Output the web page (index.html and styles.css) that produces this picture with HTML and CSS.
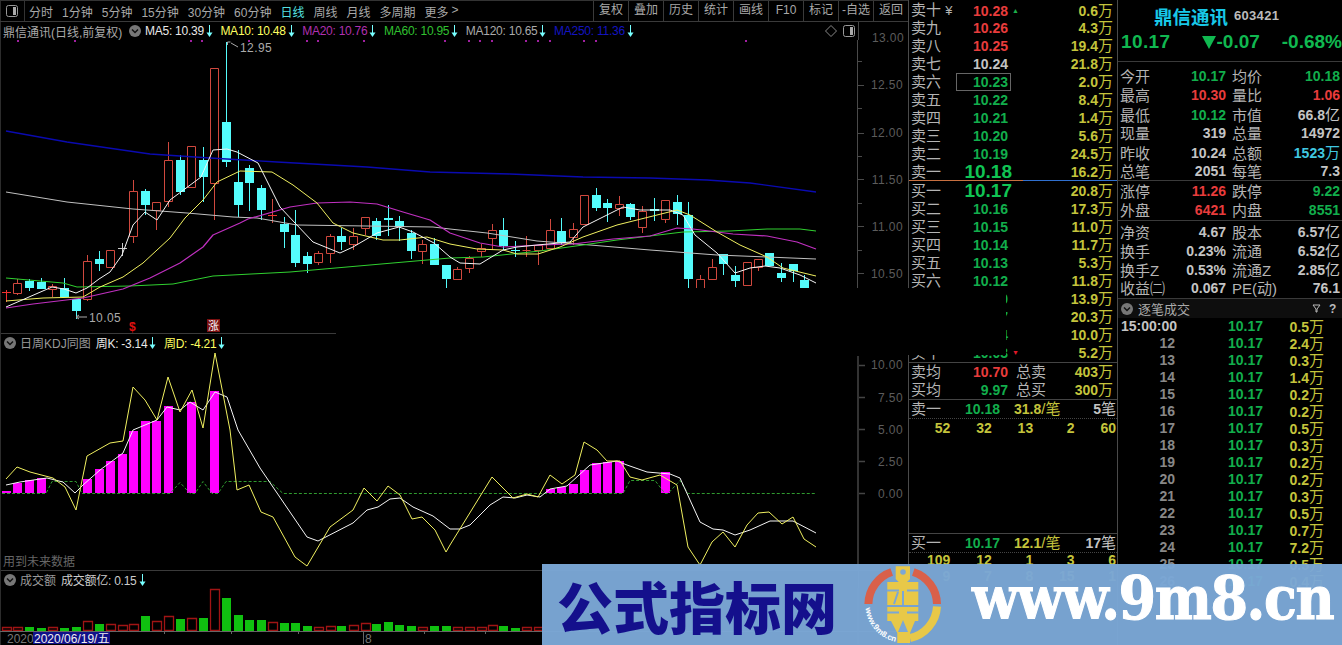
FILE: index.html
```html
<!DOCTYPE html>
<html lang="zh">
<head>
<meta charset="utf-8">
<title>鼎信通讯</title>
<link rel="stylesheet" href="styles.css">
</head>
<body>
<svg class="defs" width="0" height="0"><defs>
<g id="arrow"><path d="M3.5 1V10" class="arr-line"/><path d="M0.5 8.500H6.500L3.500 13z" class="arr-head"/></g>
<g id="chev"><circle cx="6" cy="6" r="6" class="chev-c"/><path d="M3 4.500L6 7.500L9 4.500" class="chev-l"/></g>
</defs></svg>
<div class="page">
  <section class="charts">
    <nav class="toolbar">
      <span class="tb-icon"><svg width="12" height="12"><rect x="0.500" y="0.500" width="11" height="11" rx="2" class="toggle-o"/><rect x="7" y="2" width="3" height="8" class="toggle-f"/></svg></span>
      <div class="tb-periods">
        <span>分时</span><span>1分钟</span><span>5分钟</span><span>15分钟</span><span>30分钟</span><span>60分钟</span><span class="on">日线</span><span>周线</span><span>月线</span><span>多周期</span><span>更多</span><span class="more">&gt;</span>
      </div>
      <div class="tb-btns">
        <span>复权</span><span>叠加</span><span>历史</span><span>统计</span><span>画线</span><span>F10</span><span>标记</span><span>-自选</span><span>返回</span>
      </div>
    </nav>

    <header class="phead">
      <div class="phead-l">
        <span class="ttl">鼎信通讯(日线,前复权)</span>
        <svg class="chev main-chev" width="12" height="12"><use href="#chev"/></svg>
        <span class="ma c-w">MA5: 10.39<svg class="ar" width="7" height="14"><use href="#arrow"/></svg></span>
        <span class="ma c-y">MA10: 10.48<svg class="ar" width="7" height="14"><use href="#arrow"/></svg></span>
        <span class="ma c-m">MA20: 10.76<svg class="ar" width="7" height="14"><use href="#arrow"/></svg></span>
        <span class="ma c-g">MA60: 10.95<svg class="ar" width="7" height="14"><use href="#arrow"/></svg></span>
        <span class="ma c-s">MA120: 10.65<svg class="ar" width="7" height="14"><use href="#arrow"/></svg></span>
        <span class="ma c-b">MA250: 11.36<svg class="ar" width="7" height="14"><use href="#arrow"/></svg></span>
        <span class="ph-icons">
          <svg width="12" height="12"><path d="M6 0.500L11.500 6L6 11.500L0.500 6z" class="diamond"/></svg>
          <svg width="12" height="12"><rect x="0.500" y="0.500" width="11" height="11" rx="2" class="toggle-o"/><rect x="7" y="2" width="3" height="8" class="toggle-f"/></svg>
        </span>
      </div>
      <div class="axis-cap axis-cap-top">13.00</div>
    </header>
    <svg class="plot plot-main" width="908" height="293" viewBox="0 40 908 293">
      <path class="axis" d="M857.500 40V288M858 61.500h4M858 85.500h6M858 108.500h4M858 133.500h6M858 156.500h4M858 179.500h6M858 203.500h4M858 226.500h6M858 250.500h4M858 273.500h6"/>
      <g class="axis-label"><text x="903" y="89">12.50</text><text x="903" y="137">12.00</text><text x="903" y="184">11.50</text><text x="903" y="231">11.00</text><text x="903" y="278">10.50</text></g>
      <path class="dots" d="M17 40h2v2h-2zM74 40h2v2h-2zM190 40h2v2h-2zM201 40h2v2h-2zM248 40h2v2h-2zM306 40h2v2h-2zM317 40h2v2h-2zM363 40h2v2h-2zM444 40h2v2h-2zM468 40h2v2h-2zM479 40h2v2h-2zM491 40h2v2h-2zM525 40h2v2h-2zM537 40h2v2h-2zM549 40h2v2h-2zM583 40h2v2h-2zM595 40h2v2h-2zM745 40h2v2h-2z"/>
      <path class="cd-wick" d="M29.500 279V291M41.500 278V289M64.500 278V297M76.500 299V319M99.500 251V271M145.500 189V215M180.500 155V195M203.500 147V202M226.500 42V167M238.500 150V217M249.500 165V211M261.500 185V220M284.500 217V248M295.500 210V267M307.500 252V273M341.500 228V250M376.500 218V240M388.500 205V236M399.500 216V241M411.500 230V259M434.500 238V265M446.500 265V289M503.500 218V250M515.500 241V257M561.500 218V245M596.500 188V211M607.500 199V222M630.500 203V220M654.500 198V221M677.500 195V225M688.500 202V288M723.500 254V275M735.500 266V287M781.500 263V282M793.500 264V282M804.500 275V289"/>
      <path class="cd-body" d="M25 281h9v7h-9zM37 282h9v7h-9zM60 288h9v9h-9zM72 299h9v12h-9zM95 259h9v5h-9zM141 191h9v14h-9zM176 160h9v32h-9zM199 160h9v17h-9zM222 122h9v40h-9zM234 182h9v23h-9zM245 168h9v15h-9zM257 188h9v22h-9zM280 224h9v8h-9zM291 235h9v28h-9zM303 256h9v8h-9zM337 236h9v6h-9zM372 221h9v15h-9zM384 218h9v2h-9zM395 221h9v6h-9zM407 233h9v18h-9zM430 244h9v21h-9zM442 265h9v14h-9zM499 230h9v16h-9zM511 250h9v1h-9zM557 231h9v12h-9zM592 195h9v13h-9zM603 203h9v5h-9zM626 204h9v13h-9zM650 209h9v2h-9zM673 202h9v12h-9zM684 215h9v64h-9zM719 254h9v10h-9zM731 275h9v6h-9zM765 253h9v13h-9zM777 273h9v5h-9zM789 264h9v7h-9zM800 280h9v9h-9z"/>
      <path class="cd-red" d="M13.500 283.500h8v10h-8zM17.500 279V283M17.500 294V295M48.500 286.500h8v3h-8zM52.500 284V286M52.500 290V297M83.500 261.500h8v38h-8zM87.500 255V261M87.500 300V301M106.500 250.500h8v17h-8zM129.500 191.500h8v45h-8zM133.500 180V191M133.500 237V243M152.500 202.500h8v8h-8zM156.500 211V230M164.500 160.500h8v41h-8zM168.500 142V160M168.500 202V207M187.500 146.500h8v41h-8zM210.500 68.500h8v115h-8zM214.500 184V220M272.500 199V223M314.500 253.500h8v9h-8zM318.500 251V253M318.500 263V265M326.500 236.500h8v17h-8zM330.500 234V236M330.500 254V263M349.500 236.500h8v8h-8zM353.500 228V236M353.500 245V250M361.500 217.500h8v11h-8zM365.500 229V235M418.500 244.500h8v7h-8zM422.500 240V244M422.500 252V264M453.500 269.500h8v10h-8zM457.500 267V269M465.500 258.500h8v10h-8zM469.500 256V258M469.500 269V273M477.500 248.500h8v3h-8zM481.500 244V248M481.500 252V257M488.500 230.500h8v8h-8zM492.500 224V230M492.500 239V250M522.500 250.500h8M526.500 236V257M534.500 245.500h8v5h-8zM538.500 251V265M546.500 230.500h8v18h-8zM550.500 219V230M550.500 249V250M569.500 229.500h8v8h-8zM573.500 223V229M573.500 238V245M580.500 195.500h8v29h-8zM615.500 204.500h8v4h-8zM619.500 196V204M619.500 209V216M638.500 211.500h8v16h-8zM642.500 206V211M642.500 228V233M661.500 200.500h8v19h-8zM665.500 220V223M696.500 279.500h8v10h-8zM700.500 275V279M708.500 267.500h8v12h-8zM712.500 259V267M743.500 262.500h8v23h-8zM754.500 259.500h8v8h-8zM758.500 268V271"/>
      <path class="cd-cross-r" d="M6.500 290V302M2 292.500h9M268 215.500h9"/>
      <path class="cd-cross-w" d="M122.500 243V256M118 248.500h9"/>
      <polyline class="ln-blue" points="6,131 67,142 150,154 210,158 277,162 367,167 430,172 510,174 583,177 650,178 707,180 750,183 816,192"/>
      <polyline class="ln-silver" points="6,192 67,202 133,209 187,213 233,217 257,218 297,225 367,226 433,227 450,229 487,233 537,241 590,245 650,250 717,255 767,257 816,259"/>
      <polyline class="ln-green" points="6,278 63,283 77,287 130,286 173,284 213,276 290,272 347,267 450,258 483,257 540,251 583,245 617,240 650,236 683,232 730,231 767,229 800,229 816,231"/>
      <polyline class="ln-mag" points="6,308 33,304 83,298 123,289 150,278 180,263 203,247 213,235 240,223 248,219 290,207 317,203 350,202 377,204 403,212 430,220 450,233 480,243 503,247 540,245 573,244 613,239 650,236 677,228 693,229 733,234 767,236 797,242 816,249"/>
      <polyline class="ln-yel" points="6,301 43,298 83,297 100,287 123,277 143,263 170,238 185,218 203,200 217,182 240,171 272,172 293,185 317,203 333,223 353,233 383,240 400,240 427,237 450,244 477,249 503,250 517,254 538,254 560,247 583,237 617,225 657,215 677,210 690,215 717,232 740,245 767,257 783,268 816,276"/>
      <polyline class="ln-wht" points="6,307 52,287 64,289 76,293 87,288 99,279 110,272 122,255 133,225 145,212 157,220 170,200 201,177 213,150 227,149 237,152 258,163 268,183 280,207 295,223 313,242 340,253 353,247 377,233 399,227 413,232 434,243 450,257 460,263 480,264 503,250 517,247 537,245 570,242 583,227 607,215 623,207 640,210 670,210 683,215 695,235 717,253 735,273 750,268 765,266 780,268 800,275 816,283"/>
      <path class="note-l" d="M227.500 42h3M227.500 42v3M231 43L238 47"/>
      <text class="note" x="240" y="52">12.95</text>
      <path class="note-l" d="M76 317H87M76 317l3-2M76 317l3 2"/>
      <text class="note" x="89" y="322">10.05</text>
      <text class="mk-s" x="129" y="331">$</text>
      <rect class="mk-box" x="207" y="319" width="13" height="13"/>
      <text class="mk-z" x="208" y="330">涨</text>
    </svg>

    <header class="phead phead-b">
      <div class="phead-l">
        <svg class="chev sub-chev" width="12" height="12"><use href="#chev"/></svg>
        <span class="sub-t">日周KDJ同图</span>
        <span class="ma c-w">周K: -3.14<svg class="ar" width="7" height="14"><use href="#arrow"/></svg></span>
        <span class="ma c-y">周D: -4.21<svg class="ar" width="7" height="14"><use href="#arrow"/></svg></span>
      </div>
      <div class="axis-cap axis-cap-off"></div>
    </header>
    <svg class="plot plot-kdj" width="908" height="219" viewBox="0 351 908 219">
      <path class="axis axis-thick" d="M858 356V570M859 365.500h6M859 397.500h6M859 429.500h6M859 461.500h6M859 493.500h6"/>
      <g class="axis-label"><text x="903" y="369">10.00</text><text x="903" y="402">7.50</text><text x="903" y="434">5.00</text><text x="903" y="466">2.50</text><text x="903" y="498">0.00</text></g>
      <path class="bar-m" d="M2 491h9v2h-9zM13 483h9v10h-9zM25 480h9v13h-9zM37 478h9v15h-9zM83 479h9v14h-9zM95 469h9v24h-9zM106 461h9v32h-9zM118 454h9v39h-9zM129 431h9v62h-9zM141 421h9v72h-9zM152 421h9v72h-9zM164 406h9v87h-9zM187 402h9v91h-9zM210 391h9v102h-9zM546 489h9v4h-9zM557 487h9v6h-9zM569 484h9v9h-9zM580 470h9v23h-9zM592 463h9v30h-9zM603 462h9v31h-9zM615 461h9v32h-9zM661 472h9v21h-9z"/>
      <path class="dash" d="M2 493.500H46L52 481.500H76L82 493.500H170L180 482.500L190 493.500H195L203 481.500L212 493.500H218L226 481.500H270L283 493.500H623L630 480.500H655L665 493.500H668L680 480.500L688 493.500H816"/>
      <polyline class="kd-w" points="6,485 20,482 47,478 63,482 75,493 83,485 100,470 123,453 133,430 157,420 167,407 180,410 190,402 203,410 215,392 227,397 238,430 260,468 307,537 318,541 353,523 367,510 378,507 390,499 400,498 413,507 433,516 450,529 460,529 470,525 490,505 503,497 515,498 527,495 540,497 550,489 567,486 590,465 617,461 627,465 647,472 670,474 680,478 700,522 713,529 723,530 735,535 750,530 770,521 793,521 816,533"/>
      <polyline class="kd-y" points="6,479 17,467 30,472 53,478 65,487 76,510 87,456 110,443 123,441 133,387 145,400 157,420 168,377 180,412 192,390 203,428 215,353 230,430 237,490 249,485 261,512 273,517 295,557 307,566 330,527 353,510 364,488 377,501 388,486 400,495 412,519 422,517 435,530 446,552 450,545 492,477 513,498 527,494 538,497 550,475 562,484 575,475 584,442 597,450 607,461 620,461 630,477 642,480 660,475 677,485 688,547 700,565 712,542 723,532 735,547 747,525 758,513 769,512 782,524 793,517 804,539 816,547"/>
      <text class="warn" x="3" y="566">用到未来数据</text>
    </svg>

    <header class="phead phead-b">
      <div class="phead-l">
        <svg class="chev sub-chev" width="12" height="12"><use href="#chev"/></svg>
        <span class="sub-t">成交额</span>
        <span class="ma c-l">成交额亿: 0.15<svg class="ar" width="7" height="14"><use href="#arrow"/></svg></span>
      </div>
      <div class="axis-cap"></div>
    </header>
    <svg class="plot plot-vol" width="908" height="56" viewBox="0 589 908 56">
      <path class="vol-g" d="M25 628h9v4h-9zM37 629h9v3h-9zM60 629h9v3h-9zM72 628h9v4h-9zM95 625h9v7h-9zM141 617h9v15h-9zM176 620h9v12h-9zM199 619h9v13h-9zM222 599h9v33h-9zM234 616h9v16h-9zM245 621h9v11h-9zM257 621h9v11h-9zM280 624h9v8h-9zM291 624h9v8h-9zM303 627h9v5h-9zM337 627h9v5h-9zM372 625h9v7h-9zM384 623h9v9h-9zM395 626h9v6h-9zM407 627h9v5h-9zM430 627h9v5h-9zM442 627h9v5h-9zM499 627h9v5h-9zM511 629h9v3h-9z"/>
      <path class="vol-r" d="M2.500 628.500h9v3h-9zM13.500 628.500h9v3h-9zM48.500 628.500h9v3h-9zM83.500 622.500h9v9h-9zM106.500 625.500h9v6h-9zM118.500 626.500h9v5h-9zM129.500 625.500h9v6h-9zM152.500 622.500h9v9h-9zM164.500 617.500h9v14h-9zM187.500 619.500h9v12h-9zM210.500 590.500h9v41h-9zM268.500 623.500h9v8h-9zM314.500 628.500h9v3h-9zM326.500 627.500h9v4h-9zM349.500 626.500h9v5h-9zM361.500 624.500h9v7h-9zM418.500 628.500h9v3h-9zM453.500 628.500h9v3h-9zM465.500 628.500h9v3h-9zM477.500 628.500h9v3h-9zM488.500 626.500h9v5h-9zM522.500 628.500h9v3h-9zM534.500 628.500h9v3h-9z"/>
      <path class="vol-base" d="M0 632.500H908M164.500 632v3M231.500 632v3M298.500 632v3M424.500 632v3M485.500 632v3M363.500 632v13"/>
      <path class="axis axis-thick" d="M858 589V645"/>
      <text class="date-y" x="7" y="644">2020</text>
      <rect class="date-box" x="33" y="633" width="77" height="12"/>
      <text class="date-t" x="34" y="644">2020/06/19/五</text>
      <text class="date-y" x="365" y="644">8</text>
    </svg>
  </section>

  <section class="book">
    <div class="bk-row"><span class="l">卖十 <em>¥</em></span><b class="r">10.28</b><i class="up">▲</i><span class="v">0.6<u>万</u></span></div>
    <div class="bk-row"><span class="l">卖九</span><b class="r">10.26</b><i></i><span class="v">4.3<u>万</u></span></div>
    <div class="bk-row"><span class="l">卖八</span><b class="r">10.25</b><i></i><span class="v">19.4<u>万</u></span></div>
    <div class="bk-row"><span class="l">卖七</span><b class="n">10.24</b><i></i><span class="v">21.8<u>万</u></span></div>
    <div class="bk-row"><span class="l">卖六</span><b class="g hl">10.23</b><i></i><span class="v">2.0<u>万</u></span></div>
    <div class="bk-row"><span class="l">卖五</span><b class="g">10.22</b><i></i><span class="v">8.4<u>万</u></span></div>
    <div class="bk-row"><span class="l">卖四</span><b class="g">10.21</b><i></i><span class="v">1.4<u>万</u></span></div>
    <div class="bk-row"><span class="l">卖三</span><b class="g">10.20</b><i></i><span class="v">5.6<u>万</u></span></div>
    <div class="bk-row"><span class="l">卖二</span><b class="g">10.19</b><i></i><span class="v">24.5<u>万</u></span></div>
    <div class="bk-row"><span class="l">卖一</span><b class="g big">10.18</b><i></i><span class="v">16.2<u>万</u></span></div>
    <div class="bk-mid"></div>
    <div class="bk-row"><span class="l">买一</span><b class="g big">10.17</b><i></i><span class="v">20.8<u>万</u></span></div>
    <div class="bk-row"><span class="l">买二</span><b class="g">10.16</b><i></i><span class="v">17.3<u>万</u></span></div>
    <div class="bk-row"><span class="l">买三</span><b class="g">10.15</b><i></i><span class="v">11.0<u>万</u></span></div>
    <div class="bk-row"><span class="l">买四</span><b class="g">10.14</b><i></i><span class="v">11.7<u>万</u></span></div>
    <div class="bk-row"><span class="l">买五</span><b class="g">10.13</b><i></i><span class="v">5.3<u>万</u></span></div>
    <div class="bk-row"><span class="l">买六</span><b class="g">10.12</b><i></i><span class="v">11.8<u>万</u></span></div>
    <div class="bk-row"><span class="l">买七</span><b class="g">10.10</b><i></i><span class="v">13.9<u>万</u></span></div>
    <div class="bk-row"><span class="l">买八</span><b class="g">10.07</b><i></i><span class="v">20.3<u>万</u></span></div>
    <div class="bk-row"><span class="l">买九</span><b class="g">10.04</b><i></i><span class="v">10.0<u>万</u></span></div>
    <div class="bk-row"><span class="l">买十</span><b class="g">10.03</b><i class="dn">▼</i><span class="v">5.2<u>万</u></span></div>
    <div class="bk-sec bk-tot">
      <div class="tot-row"><span class="l">卖均</span><b class="r">10.70</b><span class="l2">总卖</span><span class="v">403<u>万</u></span></div>
      <div class="tot-row"><span class="l">买均</span><b class="g">9.97</b><span class="l2">总买</span><span class="v">300<u>万</u></span></div>
    </div>
    <div class="bk-sec bk-q">
      <div class="q-row"><span class="l">卖一</span><b class="g">10.18</b><span class="v">31.8<u>/笔</u></span><span class="qn">5<u>笔</u></span></div>
      <div class="q-ticks"><b>52</b><b>32</b><b>13</b><b>2</b><b>60</b></div>
    </div>
    <div class="bk-sec bk-q bk-q2">
      <div class="q-row"><span class="l">买一</span><b class="g">10.17</b><span class="v">12.1<u>/笔</u></span><span class="qn">17<u>笔</u></span></div>
      <div class="q-ticks q-tight"><b>109</b><b>12</b><b>1</b><b>3</b><b>6</b></div>
      <div class="q-ticks q-tight"><b>9</b><b>7</b><b>8</b><b>15</b><b>1</b></div>
    </div>
  </section>

  <section class="quote">
    <div class="qt-top">
      <div class="qt-name"><strong>鼎信通讯</strong><span>603421</span></div>
      <div class="qt-price"><b class="p1">10.17</b><b class="p2"><svg width="14" height="14"><path d="M0 1H14L7 14z" class="tri"/></svg>-0.07</b><b class="p3">-0.68%</b></div>
    </div>
    <div class="qt-grp qt-g1">
      <div class="qr"><span>今开</span><b class="g">10.17</b><span>均价</span><b class="g">10.18</b></div>
      <div class="qr"><span>最高</span><b class="r">10.30</b><span>量比</span><b class="r">1.06</b></div>
      <div class="qr"><span>最低</span><b class="g">10.12</b><span>市值</span><b class="n">66.8<u>亿</u></b></div>
      <div class="qr"><span>现量</span><b class="n">319</b><span>总量</span><b class="n">14972</b></div>
      <div class="qr"><span>昨收</span><b class="n">10.24</b><span>总额</span><b class="c">1523<u>万</u></b></div>
      <div class="qr"><span>总笔</span><b class="n">2051</b><span>每笔</span><b class="n">7.3</b></div>
    </div>
    <div class="qt-grp qt-g2">
      <div class="qr"><span>涨停</span><b class="r">11.26</b><span>跌停</span><b class="g">9.22</b></div>
      <div class="qr"><span>外盘</span><b class="r">6421</b><span>内盘</span><b class="g">8551</b></div>
    </div>
    <div class="qt-grp qt-g2">
      <div class="qr"><span>净资</span><b class="n">4.67</b><span>股本</span><b class="n">6.57<u>亿</u></b></div>
      <div class="qr"><span>换手</span><b class="n">0.23%</b><span>流通</span><b class="n">6.52<u>亿</u></b></div>
      <div class="qr"><span>换手Z</span><b class="n">0.53%</b><span>流通Z</span><b class="n">2.85<u>亿</u></b></div>
      <div class="qr"><span>收益㈡</span><b class="n">0.067</b><span>PE(动)</span><b class="n">76.1</b></div>
    </div>
    <div class="tr-head">
      <svg class="chev" width="12" height="12"><use href="#chev"/></svg>
      <span class="tr-t">逐笔成交</span>
      <svg class="tr-filter" width="9" height="9"><path d="M1 1H8L5 5V8H4V5z" class="filter"/></svg>
      <span class="tr-q">?</span>
    </div>
    <div class="tr-list">
      <div class="tr first"><b>15:00:00</b><b class="g">10.17</b><b class="y">0.5<u>万</u></b></div>
      <div class="tr"><b>12</b><b class="g">10.17</b><b class="y">2.4<u>万</u></b></div>
      <div class="tr"><b>13</b><b class="g">10.17</b><b class="y">0.3<u>万</u></b></div>
      <div class="tr"><b>14</b><b class="g">10.17</b><b class="y">1.4<u>万</u></b></div>
      <div class="tr"><b>15</b><b class="g">10.17</b><b class="y">0.2<u>万</u></b></div>
      <div class="tr"><b>16</b><b class="g">10.17</b><b class="y">0.2<u>万</u></b></div>
      <div class="tr"><b>17</b><b class="g">10.17</b><b class="y">0.5<u>万</u></b></div>
      <div class="tr"><b>18</b><b class="g">10.17</b><b class="y">0.3<u>万</u></b></div>
      <div class="tr"><b>19</b><b class="g">10.17</b><b class="y">0.2<u>万</u></b></div>
      <div class="tr"><b>20</b><b class="g">10.17</b><b class="y">0.2<u>万</u></b></div>
      <div class="tr"><b>21</b><b class="g">10.17</b><b class="y">0.3<u>万</u></b></div>
      <div class="tr"><b>22</b><b class="g">10.17</b><b class="y">0.5<u>万</u></b></div>
      <div class="tr"><b>23</b><b class="g">10.17</b><b class="y">0.7<u>万</u></b></div>
      <div class="tr"><b>24</b><b class="g">10.17</b><b class="y">7.2<u>万</u></b></div>
      <div class="tr"><b>25</b><b class="g">10.17</b><b class="y">0.5<u>万</u></b></div>
      <div class="tr"><b>26</b><b class="g">10.17</b><b class="y">0.4<u>万</u></b></div>
    </div>
  </section>

  <div class="mask"></div>

  <aside class="banner">
    <span class="bn-cn">公式指标网</span>
    <svg class="bn-logo" width="80" height="80" viewBox="0 0 80 80">
      <path class="lg-red" d="M6.400 39A34.300 34.300 0 0 1 29.700 7M51.300 7A34.300 34.300 0 0 1 75 39"/>
      <path class="lg-yel" d="M75 41.500A34.300 34.300 0 0 1 48 73"/>
      <path class="lg-body" d="M33.700 1.200H48V14L45 17H56.300V40H25.300V17H36.700L33.700 14zM25.300 42H56.300V56H53L48 68V78H35.300V68L29 56H25.300z"/>
      <circle class="lg-hole" cx="41" cy="7" r="2.800"/>
      <path class="lg-cut" d="M25 25.500H37M45 25.500H57M41 26V40M36 27L32 39M25 47.500H37M45 47.500H57"/>
      <path class="lg-tri" d="M41 55L36 67H46z"/>
      <path id="lgarc" class="lg-none" d="M3.500 43A37.500 37.500 0 0 0 36 77"/>
      <text class="lg-txt"><textPath href="#lgarc">www.9m8.cn</textPath></text>
    </svg>
    <span class="bn-www">www.9m8.cn</span>
  </aside>
</div>
</body>
</html>
```
FILE: styles.css
```css
* { box-sizing: border-box; }
html, body { margin: 0; padding: 0; background: #000; }
body { font-family: "Liberation Sans", "Noto Sans CJK SC", sans-serif; font-size: 12px; color: #bbb; overflow: hidden; }
.defs { position: absolute; }
.page { position: relative; width: 1342px; height: 645px; overflow: hidden; display: flex; background: #000; }
b { font-weight: 700; }
i, em, u { font-style: normal; text-decoration: none; }

/* ---------- left chart column ---------- */
.charts { width: 908px; flex: none; display: flex; flex-direction: column; border-left: 1px solid #2c2c2c; }
.toolbar { height: 22px; flex: none; display: flex; align-items: center; border-top: 1px solid #333; border-bottom: 1px solid #3a3a3a; color: #a8a8a8; margin-left: -1px; }
.tb-icon { width: 25px; height: 100%; flex: none; display: flex; align-items: center; padding-left: 6px; border-right: 1px solid #333; }
.tb-periods { display: flex; gap: 9px; padding-left: 4px; }
.tb-periods .on { color: #54e0e0; }
.tb-periods .more { margin-left: -6px; }
.tb-btns { margin-left: auto; display: flex; height: 100%; }
.tb-btns span { width: 35px; border-left: 1px solid #3a3a3a; text-align: center; line-height: 19px; }
.toggle-o { fill: none; stroke: #999; }
.toggle-f { fill: #aaa; }
.diamond { fill: none; stroke: #888; }

.phead { height: 18px; flex: none; display: flex; color: #aaa; }
.phead-b { height: 18px; border-top: 1px solid #3a3a3a; }
.phead-l { flex: 1; display: flex; align-items: center; padding-left: 2px; position: relative; white-space: nowrap; }
.axis-cap { width: 50px; flex: none; border-left: 1px solid #444; }
.axis-cap-off { border-left-color: #000; }
.axis-cap-top { height: 18px; line-height: 32px; padding-right: 4px; text-align: right; color: #5c5c5c; font-size: 12px; letter-spacing: .4px; white-space: nowrap; }
.ttl { color: #aaa; width: 126px; flex: none; }
.chev { flex: none; }
.chev-c { fill: #777; }
.chev-l { fill: none; stroke: #111; stroke-width: 1.500; }
.main-chev { margin-right: 4px; }
.sub-chev { margin: 0 4px 0 1px; }
.sub-t { color: #999; margin-right: 5px; }
.ma { display: inline-flex; align-items: center; margin-right: 7.500px; letter-spacing: -.25px; }
.ar { margin-left: 2px; flex: none; }
.arr-line { stroke: #7ff; fill: none; }
.arr-head { fill: #7ff; }
.c-w { color: #e8e8e8; }
.c-y { color: #ffff60; }
.c-m { color: #b030b0; }
.c-g { color: #30c030; }
.c-s { color: #aaa; }
.c-b { color: #1414c0; }
.c-l { color: #ccc; }
.ph-icons { position: absolute; right: 3px; top: 3px; display: flex; gap: 6px; }

.plot { display: block; flex: none; margin-left: -1px; font-family: "Liberation Sans", "Noto Sans CJK SC", sans-serif; }
.axis { stroke: #4a4a4a; fill: none; }
.axis-thick { stroke: #444; stroke-width: 1.500; }
.axis-label { fill: #5c5c5c; font-size: 12px; letter-spacing: .4px; text-anchor: end; }
.dots { fill: #a020a0; }
.cd-wick { stroke: #54fcfc; fill: none; }
.cd-body { fill: #54fcfc; }
.cd-red { stroke: #d0483e; fill: none; }
.cd-cross-r { stroke: #f03030; fill: none; stroke-width: 1; }
.cd-cross-w { stroke: #ccc; fill: none; }
polyline { fill: none; stroke-linejoin: round; }
.ln-blue { stroke: #0a0ab0; stroke-width: 1.300; }
.ln-silver { stroke: #c0c0c0; }
.ln-green { stroke: #30d030; }
.ln-mag { stroke: #c030c0; stroke-width: 1.200; }
.ln-yel { stroke: #f0f060; }
.ln-wht { stroke: #f4f4f4; }
.note { fill: #aaa; font-size: 12px; letter-spacing: .4px; }
.note-l { stroke: #aaa; fill: none; }
.mk-s { fill: #e01010; font-size: 12px; font-weight: 700; }
.mk-box { fill: #7a1010; }
.mk-z { fill: #fff; font-size: 11px; }
.bar-m { fill: #ff00ff; }
.dash { fill: none; stroke: #2f9a2f; stroke-dasharray: 3 2; }
.kd-w { stroke: #f4f4f4; }
.kd-y { stroke: #f0f060; }
.warn { fill: #666; font-size: 12px; }
.vol-g { fill: #10c010; }
.vol-r { fill: none; stroke: #a01414; stroke-width: 1.300; }
.vol-base { stroke: #666; fill: none; }
.date-y { fill: #777; font-size: 12px; }
.date-box { fill: #101088; }
.date-t { fill: #eee; font-size: 12px; }

/* ---------- order book ---------- */
.book { width: 210px; flex: none; border-left: 1px solid #4a4a4a; border-right: 1px solid #4a4a4a; display: flex; flex-direction: column; padding-top: 1px; }
.bk-row { height: 18px; flex: none; display: grid; grid-template-columns: 45px 55px 12px 1fr; padding: 0 4px 0 2px; align-items: center; line-height: 18px; white-space: nowrap; }
.l, .l2 { font-size: 15px; color: #b4b4b4; }
.l em { font-size: 13px; margin-left: 0; }
.bk-row b { font-size: 14px; text-align: right; padding-right: 3px; height: 18px; }
.bk-row b.big { font-size: 19px; padding-right: 0; margin-right: -1px; }
.bk-row b.hl { outline: 1px solid #666; outline-offset: -1px; }
.bk-row i { font-size: 7px; text-align: left; padding-left: 1px; }
.up { color: #1cb04a; }
.dn { color: #e01828; }
.r { color: #e83c3c; }
.g { color: #12ae4c; }
.big.g { color: #10c454; }
.n { color: #c4c4c4; }
.c { color: #40c8e0; }
.y { color: #c4c43c; }
.v { color: #c4c43c; font-weight: 700; font-size: 14px; text-align: right; }
u { font-weight: 400; font-size: 15px; }
.bk-mid { height: 1px; flex: none; margin-top: -1px; background: linear-gradient(90deg, #c87040 0 55%, #3070d0 55% 100%); }
.bk-mid + .bk-row { margin-top: 1px; }
.bk-sec { border-top: 1px solid #444; flex: none; }
.bk-tot { height: 37px; }
.tot-row { height: 18px; display: grid; grid-template-columns: 45px 55px 50px 1fr; padding: 0 4px 0 2px; margin-right: 0; align-items: center; line-height: 18px; white-space: nowrap; }
.tot-row b { font-size: 14px; text-align: right; padding-right: 3px; }
.tot-row .l2 { padding-left: 5px; }
.bk-q { height: 134px; }
.bk-q2 { height: auto; }
.q-row { height: 19px; display: grid; grid-template-columns: 45px 44px 60px 1fr; align-items: center; padding: 0 1px 0 2px; border-bottom: 1px dotted #444; white-space: nowrap; line-height: 18px; }
.q-row b { font-size: 14px; text-align: right; }
.q-row .v { text-align: left; padding-left: 14px; overflow: visible; }
.qn { color: #c4c4c4; font-weight: 700; font-size: 14px; text-align: right; }
.qn u { color: #c4c4c4; }
.q-ticks { display: grid; grid-template-columns: repeat(5, 1fr); width: 207px; height: 18px; line-height: 18px; color: #c4c43c; font-size: 14px; }
.q-ticks b { text-align: right; }
.q-tight { height: 16px; line-height: 15px; }

/* ---------- quote ---------- */
.quote { flex: 1; min-width: 0; display: flex; flex-direction: column; }
.qt-top { height: 62px; flex: none; border-bottom: 1px solid #3a3a3a; }
.qt-name { height: 31px; display: flex; align-items: center; padding-left: 36px; gap: 6px; }
.qt-name strong { font-size: 18.500px; color: #18c8e8; font-weight: 700; }
.qt-name span { font-size: 13px; font-weight: 700; color: #bbb; letter-spacing: .3px; }
.qt-price { height: 22px; display: flex; align-items: center; padding-left: 3px; color: #10b850; font-size: 19px; }
.p1 { letter-spacing: .4px; }
.p2 { margin-left: 31px; display: inline-flex; align-items: center; width: 74px; gap: 1px; }
.p3 { margin-left: 13px; }
.tri { fill: #10b850; }
.qt-grp { flex: none; border-bottom: 1px solid #3a3a3a; }
.qt-g1 { padding-top: 5px; height: 119px; }
.qt-g2 { padding-top: 1px; }
.qr { height: 19px; display: grid; grid-template-columns: 50px 56px 1fr auto; padding: 0 2px; align-items: center; white-space: nowrap; line-height: 19px; }
.qr span { font-size: 15px; color: #b4b4b4; }
.qr span:nth-child(3) { padding-left: 6px; }
.qr b { font-size: 14px; text-align: right; }
.qr b u { color: inherit; }
.tr-head { height: 19px; flex: none; display: flex; align-items: center; padding: 0 4px 0 3px; background: #0e0e0e; }
.tr-t { font-size: 13px; color: #aaa; margin-left: 5px; }
.tr-filter { margin-left: auto; }
.filter { fill: none; stroke: #bbb; }
.tr-q { color: #bbb; font-weight: 700; font-size: 12px; margin-left: 8px; width: 9px; }
.tr-list { flex: none; }
.tr { height: 17px; display: grid; grid-template-columns: 54px 88px 61px; padding-left: 3px; font-size: 14px; line-height: 17px; white-space: nowrap; }
.tr b { text-align: right; color: #888; }
.tr b.g { color: #12ae4c; }
.tr b.y { color: #c4c43c; }
.tr.first b:first-child { color: #c4c4c4; }

/* ---------- overlays ---------- */
.mask { position: absolute; left: 336px; top: 288px; width: 670px; height: 67px; background: #000; }
.banner { position: absolute; left: 542px; top: 564px; right: 0; bottom: 0; background: rgba(123, 167, 214, .97); display: flex; align-items: center; padding-left: 15px; overflow: hidden; }
.bn-cn { font-family: "Noto Sans CJK SC", sans-serif; font-weight: 900; font-size: 56px; line-height: 60px; color: #14108c; white-space: nowrap; width: 305px; flex: none; }
.bn-logo { flex: none; }
.bn-www { font-family: "DejaVu Serif", serif; font-weight: 700; font-stretch: condensed; font-size: 60px; line-height: 60px; color: #fff; -webkit-text-stroke: 1px #fff; white-space: nowrap; margin-left: 30px; padding-bottom: 14px; letter-spacing: -1.400px; }
.lg-red { fill: none; stroke: #d9604a; stroke-width: 8; }
.lg-yel { fill: none; stroke: #e8c848; stroke-width: 8; }
.lg-body { fill: #e8c848; }
.lg-hole { fill: #7ba7d6; }
.lg-tri { fill: #7ba7d6; }
.lg-cut { fill: none; stroke: #7ba7d6; stroke-width: 2; }
.lg-none { fill: none; }
.lg-txt { fill: #fff; font-size: 8px; font-weight: 700; }
```
